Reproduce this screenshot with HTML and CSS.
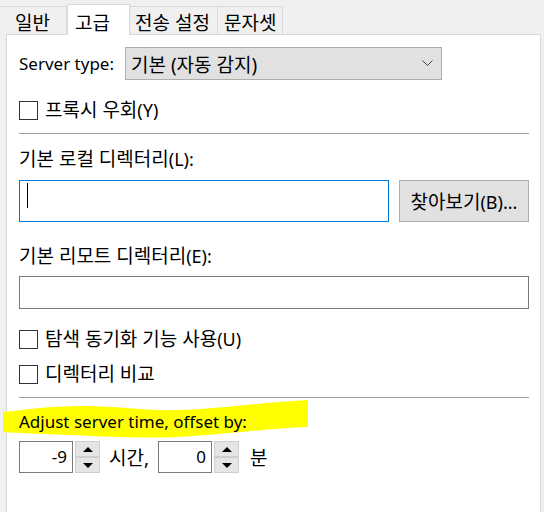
FILE: index.html
```html
<!DOCTYPE html>
<html lang="ko">
<head>
  <meta charset="UTF-8" />
  <title>사이트 관리자 - 고급</title>
  <link rel="stylesheet" href="styles.css">
</head>
<body>

  <div class="dialog">
    <!-- Pestañas -->
    <div class="tabs">
      <div class="tab tab-general">일반</div>
      <div class="tab tab-active">고급</div>
      <div class="tab tab-transfer">전송 설정</div>
      <div class="tab tab-charset">문자셋</div>
    </div>

    <!-- Panel de la pestaña "고급" -->
    <div class="panel">

      <div class="row row-server">
        <span class="server-label">Server type:</span>
        <div class="select">
          <span>기본 (자동 감지)</span>
          <svg class="chevron" width="11" height="7" viewBox="0 0 11 7">
            <polyline points="0.5,0.5 5.5,5.5 10.5,0.5" fill="none" stroke="#444" stroke-width="1" />
          </svg>
        </div>
      </div>

      <div class="check check-proxy">
        <span class="box"></span>프록시 우회<span class="key">(Y)</span>
      </div>

      <div class="separator sep-top"></div>

      <div class="label label-local">기본 로컬 디렉터리<span class="key">(L):</span></div>
      <div class="row row-local">
        <div class="textbox textbox-focus"><span class="caret"></span></div>
        <button class="browse-btn">찾아보기<span class="key">(B)...</span></button>
      </div>

      <div class="label label-remote">기본 리모트 디렉터리<span class="key">(E):</span></div>
      <div class="textbox textbox-remote"></div>

      <div class="check check-sync">
        <span class="box"></span>탐색 동기화 기능 사용<span class="key">(U)</span>
      </div>
      <div class="check check-compare">
        <span class="box"></span>디렉터리 비교
      </div>

      <div class="separator sep-bottom"></div>

      <div class="label label-offset">
        <svg class="marker" width="306" height="40" viewBox="0 0 306 40">
          <path d="M0,12 C20,10 45,6 80,6 C115,6 140,11 175,10 C215,9 250,3 305,0 L305,27 C270,28 235,33 190,36 C150,39 110,37 70,35 C40,34 15,33 0,32 Z" fill="#ffff00" />
        </svg>
        <span class="offset-text">Adjust server time, offset by:</span>
      </div>

      <div class="row row-offset">
        <div class="spin-input">-9</div>
        <div class="spin-buttons">
          <div class="spin-btn"><span class="arrow-up"></span></div>
          <div class="spin-btn"><span class="arrow-down"></span></div>
        </div>
        <span class="unit unit-hours">시간,</span>
        <div class="spin-input">0</div>
        <div class="spin-buttons">
          <div class="spin-btn"><span class="arrow-up"></span></div>
          <div class="spin-btn"><span class="arrow-down"></span></div>
        </div>
        <span class="unit unit-minutes">분</span>
      </div>

    </div>
  </div>

</body>
</html>
```

FILE: styles.css
```css
/* Estilos generales */
body {
  margin: 0;
  background: #f0f0f0;
  font-family: "Noto Sans", "Noto Sans CJK KR", sans-serif;
  font-size: 19px;
  color: #000;
  overflow: hidden;
}

.dialog {
  width: 544px;
  height: 512px;
  overflow: hidden;
}

/* Texto latino dentro de etiquetas coreanas */
.key {
  font-size: 18px;
}

/* Pestañas */
.tabs {
  display: flex;
  align-items: flex-end;
  height: 30px;
  padding-top: 4px;
}

.tab {
  box-sizing: border-box;
  height: 28px;
  padding-top: 5px;
  line-height: 23px;
  border-top: 1px solid #d9d9d9;
  border-right: 1px solid #d9d9d9;
  background: #f0f0f0;
  white-space: nowrap;
}

.tab-general {
  width: 67px;
  padding-left: 15px;
}

.tab-active {
  position: relative;
  z-index: 1;
  width: 63px;
  height: 31px;
  margin-bottom: -1px;
  padding-top: 7px;
  padding-left: 7px;
  border-left: 1px solid #d9d9d9;
  background: #fff;
}

.tab-transfer {
  width: 88px;
  padding-left: 5px;
}

.tab-charset {
  width: 65px;
  padding-left: 6px;
}

/* Panel */
.panel {
  box-sizing: border-box;
  width: 535px;
  height: 500px;
  margin-left: 6px;
  padding: 0 11px 0 12px;
  border: 1px solid #d9d9d9;
  background: #fff;
  display: flex;
  flex-direction: column;
}

.row {
  display: flex;
  align-items: center;
}

.row-server {
  margin-top: 12px;
  height: 33px;
}

.server-label {
  width: 106px;
  font-size: 17px;
}

.select {
  box-sizing: border-box;
  width: 317px;
  height: 33px;
  padding: 0 8px 0 5px;
  border: 1px solid #adadad;
  background: #e1e1e1;
  display: flex;
  align-items: center;
  justify-content: space-between;
}

/* Casillas */
.check {
  display: flex;
  align-items: center;
  height: 24px;
  line-height: 24px;
}

.box {
  box-sizing: border-box;
  width: 19px;
  height: 19px;
  margin-right: 7px;
  border: 1px solid #333;
  background: #fff;
}

.check-proxy {
  margin-top: 18px;
}

.check-sync {
  margin-top: 18px;
}

.check-compare {
  margin-top: 11px;
}

.separator {
  height: 1px;
  background: #a0a0a0;
}

.sep-top {
  margin-top: 11px;
}

.sep-bottom {
  margin-top: 11px;
}

.label {
  height: 24px;
  line-height: 24px;
}

.label-local {
  margin-top: 13px;
}

.label-remote {
  margin-top: 22px;
}

/* Campos de texto */
.row-local {
  margin-top: 9px;
}

.textbox {
  box-sizing: border-box;
  border: 1px solid #7a7a7a;
  background: #fff;
}

.textbox-focus {
  width: 370px;
  height: 42px;
  padding: 2px 0 0 7px;
  border-color: #0078d7;
}

.caret {
  display: block;
  width: 1px;
  height: 25px;
  background: #000;
}

.browse-btn {
  box-sizing: border-box;
  width: 130px;
  height: 42px;
  margin-left: 10px;
  padding: 0;
  border: 1px solid #adadad;
  background: #e1e1e1;
  font-family: inherit;
  font-size: 19px;
  color: #000;
}

.textbox-remote {
  margin-top: 8px;
  height: 33px;
}

/* Desplazamiento de hora */
.label-offset {
  position: relative;
  margin-top: 11px;
}

.marker {
  position: absolute;
  left: -16px;
  top: -9px;
}

.offset-text {
  position: relative;
  font-size: 17px;
}

.row-offset {
  margin-top: 8px;
  height: 32px;
}

.spin-input {
  box-sizing: border-box;
  width: 54px;
  height: 32px;
  padding-right: 5px;
  border: 1px solid #7a7a7a;
  font-size: 17px;
  line-height: 30px;
  text-align: right;
}

.spin-buttons {
  display: flex;
  flex-direction: column;
  width: 25px;
  margin-left: 2px;
}

.spin-btn {
  box-sizing: border-box;
  height: 16px;
  border: 1px solid #cfcfcf;
  background: #e5e5e5;
  display: flex;
  align-items: center;
  justify-content: center;
}

.arrow-up {
  border-left: 5px solid transparent;
  border-right: 5px solid transparent;
  border-bottom: 5px solid #000;
}

.arrow-down {
  border-left: 5px solid transparent;
  border-right: 5px solid transparent;
  border-top: 5px solid #000;
}

.unit-hours {
  width: 49px;
  padding-left: 9px;
}

.unit-minutes {
  padding-left: 11px;
}
```
